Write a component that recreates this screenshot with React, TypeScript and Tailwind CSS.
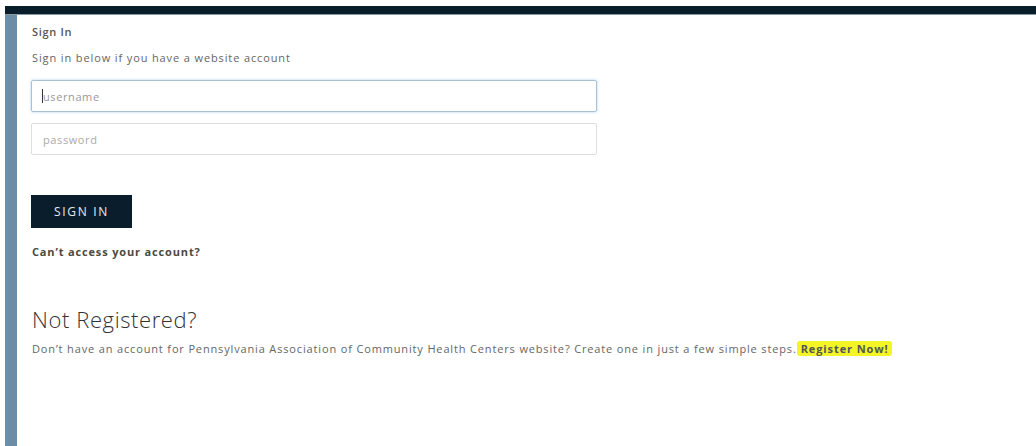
import React from "react";

export default function App() {
  return (
    <div className="w-[1036px] h-[446px] bg-white overflow-hidden flex flex-col pt-[6px]" style={{ fontFamily: '"Open Sans", "Liberation Sans", sans-serif' }}>
      <div className="ml-[5px] h-[9px] bg-[#081c29] border-b border-[#8a9aa3] shrink-0" />
      <div className="flex flex-1 min-h-0">
        <div className="ml-[5px] w-[12px] bg-[#6b8da5] shrink-0" />
        <main className="flex-1 pl-[15px] pt-[10px]">
          <h2 className="text-[11px] font-semibold text-[#555] leading-[14px] tracking-[0.7px]">Sign In</h2>
          <p className="mt-[12px] text-[11px] text-[#666] leading-[14px] tracking-[0.88px]">Sign in below if you have a website account</p>
          <div className="mt-[15px] -ml-[1px] flex flex-col gap-[11px] w-[566px]">
            <div className="relative">
              <input
                className="h-[32px] w-full rounded-[2px] border border-[#a9c1d6] shadow-[0_0_3px_rgba(130,180,230,0.6)] px-[11px] text-[11px] tracking-[0.6px] text-[#666] placeholder:text-[#999] outline-none"
                placeholder="username"
                readOnly
              />
              <span className="absolute left-[11px] top-[9px] w-px h-[14px] bg-[#333]" />
            </div>
            <input
              className="h-[32px] w-full rounded-[2px] border border-[#dedede] px-[11px] text-[11px] tracking-[0.6px] text-[#666] placeholder:text-[#aaa] outline-none"
              placeholder="password"
              readOnly
            />
          </div>
          <button className="mt-[40px] -ml-[1px] w-[101px] h-[33px] bg-[#0a1d2c] text-[#e6eaee] text-[12px] tracking-[1.7px] flex items-center justify-center">
            SIGN IN
          </button>
          <p className="mt-[17px] text-[11px] font-bold text-[#4a4a40] leading-[14px] tracking-[0.85px]">Can’t access your account?</p>
          <h1 className="mt-[47px] text-[22px] font-light text-[#333] leading-[26px] tracking-[0.6px]">Not Registered?</h1>
          <p className="mt-[10px] text-[11px] text-[#666] leading-[14px] tracking-[0.85px]">
            Don’t have an account for Pennsylvania Association of Community Health Centers website? Create one in just a few simple steps.
            <span className="bg-[#f4f527] font-bold text-[#555] pl-[4px] pr-[3px] rounded-[3px] tracking-[0.9px]">Register Now!</span>
          </p>
        </main>
      </div>
    </div>
  );
}
